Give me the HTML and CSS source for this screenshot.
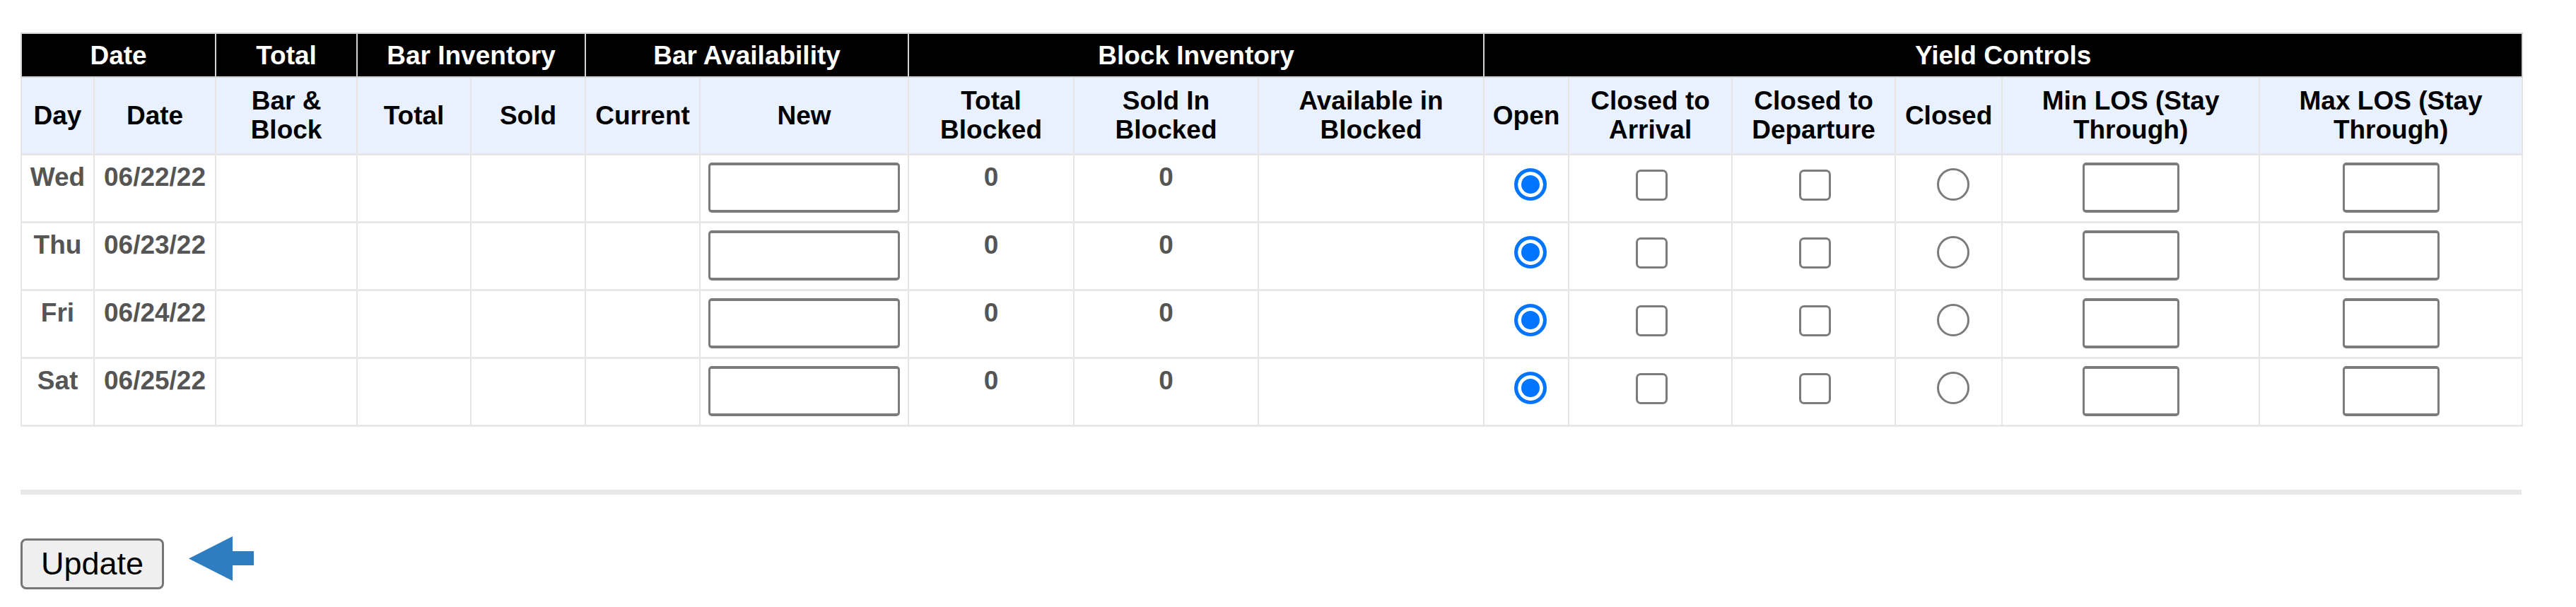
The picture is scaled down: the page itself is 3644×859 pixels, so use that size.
FILE: index.html
```html
<!DOCTYPE html>
<html>
<head>
<meta charset="utf-8">
<title>Inventory</title>
<link rel="stylesheet" href="styles.css">
</head>
<body>
<div class="page">
  <table class="grid">
    <colgroup>
      <col class="c-day"><col class="c-date"><col class="c-barblock"><col class="c-total"><col class="c-sold"><col class="c-current"><col class="c-new"><col class="c-tblocked"><col class="c-sblocked"><col class="c-ablocked"><col class="c-open"><col class="c-cta"><col class="c-ctd"><col class="c-closed"><col class="c-min"><col class="c-max">
    </colgroup>
    <thead>
      <tr class="groups">
        <th colspan="2">Date</th>
        <th>Total</th>
        <th colspan="2">Bar Inventory</th>
        <th colspan="2">Bar Availability</th>
        <th colspan="3">Block Inventory</th>
        <th colspan="6">Yield Controls</th>
      </tr>
      <tr class="labels">
        <th>Day</th>
        <th>Date</th>
        <th>Bar &amp; Block</th>
        <th>Total</th>
        <th>Sold</th>
        <th>Current</th>
        <th>New</th>
        <th>Total Blocked</th>
        <th>Sold In Blocked</th>
        <th>Available in Blocked</th>
        <th>Open</th>
        <th>Closed to Arrival</th>
        <th>Closed to Departure</th>
        <th>Closed</th>
        <th>Min LOS (Stay Through)</th>
        <th>Max LOS (Stay Through)</th>
      </tr>
    </thead>
    <tbody>
      <tr>
        <td>Wed</td><td>06/22/22</td><td></td><td></td><td></td><td></td>
        <td><input class="txt txt-new" type="text"></td>
        <td>0</td><td>0</td><td></td>
        <td><input class="radio" type="radio" name="r1" checked></td>
        <td><input class="check" type="checkbox"></td>
        <td><input class="check" type="checkbox"></td>
        <td><input class="radio" type="radio" name="r1"></td>
        <td><input class="txt txt-los" type="text"></td>
        <td><input class="txt txt-los" type="text"></td>
      </tr>
      <tr>
        <td>Thu</td><td>06/23/22</td><td></td><td></td><td></td><td></td>
        <td><input class="txt txt-new" type="text"></td>
        <td>0</td><td>0</td><td></td>
        <td><input class="radio" type="radio" name="r2" checked></td>
        <td><input class="check" type="checkbox"></td>
        <td><input class="check" type="checkbox"></td>
        <td><input class="radio" type="radio" name="r2"></td>
        <td><input class="txt txt-los" type="text"></td>
        <td><input class="txt txt-los" type="text"></td>
      </tr>
      <tr>
        <td>Fri</td><td>06/24/22</td><td></td><td></td><td></td><td></td>
        <td><input class="txt txt-new" type="text"></td>
        <td>0</td><td>0</td><td></td>
        <td><input class="radio" type="radio" name="r3" checked></td>
        <td><input class="check" type="checkbox"></td>
        <td><input class="check" type="checkbox"></td>
        <td><input class="radio" type="radio" name="r3"></td>
        <td><input class="txt txt-los" type="text"></td>
        <td><input class="txt txt-los" type="text"></td>
      </tr>
      <tr>
        <td>Sat</td><td>06/25/22</td><td></td><td></td><td></td><td></td>
        <td><input class="txt txt-new" type="text"></td>
        <td>0</td><td>0</td><td></td>
        <td><input class="radio" type="radio" name="r4" checked></td>
        <td><input class="check" type="checkbox"></td>
        <td><input class="check" type="checkbox"></td>
        <td><input class="radio" type="radio" name="r4"></td>
        <td><input class="txt txt-los" type="text"></td>
        <td><input class="txt txt-los" type="text"></td>
      </tr>
    </tbody>
  </table>

  <hr class="divider">

  <div class="actions">
    <button class="update" type="button">Update</button>
    <svg class="arrow" width="92" height="63" viewBox="0 0 92 63" aria-hidden="true">
      <polygon points="0,31.5 62,0 62,21 92,21 92,41 62,41 62,63" fill="#2f7dc1"/>
    </svg>
  </div>
</div>
</body>
</html>
```

FILE: styles.css
```css
* {
  box-sizing: border-box;
}

body {
  margin: 0;
  background: #ffffff;
  font-family: "Liberation Sans", Arial, Helvetica, sans-serif;
}

.page {
  width: 3538px;
  margin-left: 29px;
  padding-top: 46px;
}

.grid {
  width: 3538px;
  table-layout: fixed;
  border-collapse: collapse;
  border: 2px solid #e6e6e6;
}

.c-day { width: 103px; }
.c-date { width: 172px; }
.c-barblock { width: 200px; }
.c-total { width: 161px; }
.c-sold { width: 162px; }
.c-current { width: 162px; }
.c-new { width: 295px; }
.c-tblocked { width: 234px; }
.c-sblocked { width: 261px; }
.c-ablocked { width: 319px; }
.c-open { width: 120px; }
.c-cta { width: 231px; }
.c-ctd { width: 231px; }
.c-closed { width: 151px; }
.c-min { width: 364px; }
.c-max { width: 372px; }

.grid th {
  font-size: 37px;
  line-height: 41px;
  font-weight: bold;
  text-align: center;
  vertical-align: middle;
  padding: 0 8px;
}

.groups th {
  background: #000000;
  color: #ffffff;
  height: 62px;
  border: 2px solid #d4d4d4;
}

.labels th {
  background: #e9f1fe;
  color: #000000;
  height: 109px;
  border-left: 2px solid #e4e4e4;
  border-right: 2px solid #e4e4e4;
  border-bottom: 3px solid #e6e6e6;
}

.grid td {
  height: 96px;
  padding: 10px 8px 0;
  vertical-align: top;
  text-align: center;
  font-size: 37px;
  line-height: 41px;
  font-weight: bold;
  color: #555555;
  border-left: 2px solid #e6e6e6;
  border-right: 2px solid #e6e6e6;
  border-top: 3px solid #e8e8e8;
  border-bottom: 3px solid #e8e8e8;
}

.txt {
  display: inline-block;
  vertical-align: top;
  height: 71px;
  margin: 0;
  padding: 0 8px;
  background: #ffffff;
  border-style: solid;
  border-color: #7b7b7b;
  border-width: 4px 3px;
  border-radius: 5px;
  font-size: 30px;
}

.txt-new {
  width: 271px;
}

.txt-los {
  width: 137px;
}

.radio,
.check {
  -webkit-appearance: none;
  appearance: none;
  display: inline-block;
  vertical-align: top;
  background: #ffffff;
}

.radio {
  width: 46px;
  height: 46px;
  margin: 8px 0 0 12px;
  border: 3px solid #7b7b7b;
  border-radius: 50%;
}

.radio:checked {
  border: 5px solid #0075ff;
  background: #0075ff;
  box-shadow: inset 0 0 0 5px #ffffff;
}

.check {
  width: 45px;
  height: 44px;
  margin: 10px 0 0 3px;
  border: 3px solid #7b7b7b;
  border-radius: 7px;
}

.divider {
  margin: 89px 0 0;
  height: 7px;
  border: 0;
  background: #e8e8e8;
}

.actions {
  display: flex;
  align-items: flex-start;
  gap: 35px;
  margin-top: 59px;
}

.update {
  width: 203px;
  height: 72px;
  margin-top: 3px;
  padding: 0;
  background: #efefef;
  border: 3px solid #767676;
  border-radius: 8px;
  font-family: "Liberation Sans", Arial, Helvetica, sans-serif;
  font-size: 45px;
  color: #000000;
}

.arrow {
  display: block;
  flex: none;
}
```
